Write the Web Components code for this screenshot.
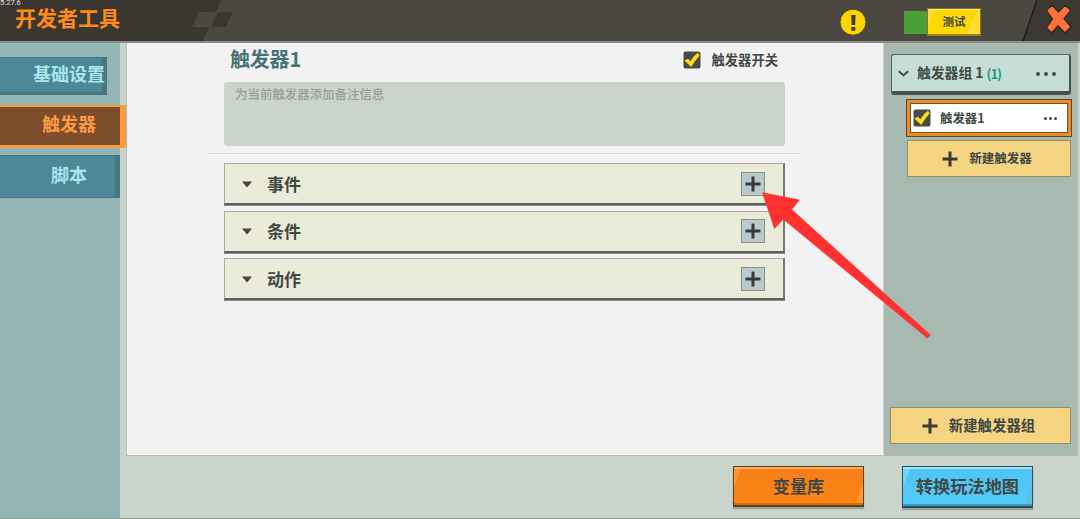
<!DOCTYPE html>
<html lang="zh-CN">
<head>
<meta charset="utf-8">
<title>开发者工具</title>
<style>
body {
    margin: 0;
    overflow: hidden;
    font-family: "Noto Sans CJK SC", sans-serif;
    font-weight: 700;
    color: #414743;
}
</style>
</head>
<body>
<dev-tools></dev-tools>
<script>
// every element only needs a shadow root filled from its own markup
class BaseElement extends HTMLElement {
  constructor() {
    super();
    this.attachShadow({ mode: "open" });
    const template = document.createElement("template");
    template.innerHTML = `<style>
* { box-sizing: border-box; }
:host { display: block; box-sizing: border-box; line-height: 1; white-space: nowrap; }
svg { display: block; flex: none; }
</style>` + this.constructor.markup;
    this.shadowRoot.appendChild(template.content.cloneNode(true));
  }
}

class PlusIcon extends BaseElement {
  static markup = `
<style>
:host { width: 16px; height: 16px; flex: none; }
</style>
<svg width="16" height="16" viewBox="0 0 16 16"><path d="M8 0.5v15M0.5 8h15" stroke="#393b34" stroke-width="3"/></svg>`;
}

class CheckBox extends BaseElement {
  static markup = `
<style>
:host { width: 18px; height: 18px; flex: none; }
</style>
<svg width="18" height="18" viewBox="0 0 18 18">
  <rect x="0.5" y="0.5" width="17" height="17" rx="2" fill="#484a49"/>
  <path d="M1.4 9.6L5 7.7L7.3 10.2Q10.6 4.6 15 1.8L16.6 4.4Q12.2 9.2 8.2 15.9Z" fill="#ffdf12"/>
</svg>`;
}

class MoreDots extends BaseElement {
  static markup = `
<style>
:host { display: flex; gap: var(--gap, 2px); flex: none; }
i { width: var(--dot, 3px); height: var(--dot, 3px); border-radius: 50%; background: #444946; }
</style>
<i></i><i></i><i></i>`;
}

class TopBar extends BaseElement {
  static markup = `
<style>
:host {
    position: relative;
    height: 43px;
    background: #4a4841;
    border-bottom: 2px solid #888b86;
}
.deco { position: absolute; left: 0; top: 0; }
.version { position: absolute; left: 0; top: -1px; font: 400 7.5px/8px Roboto, sans-serif; color: #e4e4e0; }
.row { position: relative; display: flex; align-items: flex-start; height: 41px; padding: 0 8px 0 15px; }
h1 { margin: 7px auto 0 0; font-size: 21px; line-height: 21px; font-weight: 700; color: #ff8a16; }
.warn { margin: 9px 37px 0 0; }
.toggle { display: flex; align-items: center; margin: 8px 64px 0 0; }
.on { width: 23px; height: 23px; background: #4b9f39; }
.knob {
    width: 54px;
    height: 28px;
    border: 1px solid #8d7420;
    border-bottom: 2px solid #a07d15;
    background: linear-gradient(115deg, #fbdc3a 0 12%, #ffd800 13% 78%, #ffdf35 79%);
    box-shadow: inset 0 1px #ffec78;
    font-size: 11.5px;
    line-height: 25px;
    text-align: center;
}
.close { margin-top: 4px; }
</style>
<svg class="deco" width="1080" height="41" viewBox="0 0 1080 41">
  <path d="M0 0H221L203 41H0Z" fill="#3a3730"/>
  <path d="M199 12H218L211 27H192Z" fill="#4a4841"/>
  <path d="M218 12H233L226 27H211Z" fill="#3a3730"/>
  <path d="M1037 0H1080V41H1023Z" fill="#3b3932"/>
  <path d="M1037 0L1023 41" stroke="#1d1c18" stroke-width="1.5"/>
</svg>
<div class="version">5.27.6</div>
<div class="row">
  <h1>开发者工具</h1>
  <svg class="warn" width="28" height="27" viewBox="0 0 28 27">
    <circle cx="14" cy="13.2" r="13" fill="#ffd500" stroke="#4e4727"/>
    <path d="M12.2 6h4.4l-.5 10h-3.4zM12.3 18h4v3.8h-4z" fill="#413b25"/>
  </svg>
  <div class="toggle"><div class="on"></div><div class="knob">测试</div></div>
  <svg class="close" width="27" height="30" viewBox="0 0 27 30">
    <path d="M1.4 6.5L7 1.2L13.4 8.2L20.2 1.2L25.8 6.3L19 14.7L26 23L20 28.8L13 21.6L6.8 28.8L1.2 23.8L7.5 15.2Z" fill="#ff7138" stroke="#2b2722" stroke-width="1.2" stroke-linejoin="round"/>
  </svg>
</div>`;
}

class SideTab extends BaseElement {
  static markup = `
<style>
:host {
    width: 120px;
    height: 43px;
    padding-left: 51px;
    border: solid #4a777f;
    border-width: 1px 5px 1px 0;
    background: #4d8898;
    color: #a6e6ee;
    font-size: 18px;
    line-height: 36px;
}
:host([first]) { width: 107px; height: 38px; padding-left: 33px; line-height: 30px; border-bottom-width: 3px; }
:host([active]) {
    position: relative;
    width: 126px;
    padding-left: 42px;
    border: solid #ff993d;
    border-width: 2px 6px 3px 0;
    background: #7d4e2c;
    color: #ff9a43;
    line-height: 33px;
}
</style>
<slot></slot>`;
}

class SideNav extends BaseElement {
  static markup = `
<style>
:host {
    display: flex;
    flex-direction: column;
    width: 120px;
    flex: none;
    padding-top: 14px;
    background: #94b5b6;
}
side-tab { margin-bottom: 7px; flex: none; }
side-tab[first] { margin-bottom: 10px; }
</style>
<side-tab first>基础设置</side-tab>
<side-tab active>触发器</side-tab>
<side-tab>脚本</side-tab>`;
}

class SectionRow extends BaseElement {
  static markup = `
<style>
:host {
    display: flex;
    align-items: center;
    height: 42px;
    padding: 0 18px 0 17px;
    border: 1px solid #a9aca2;
    border-right: 2px solid #777970;
    border-bottom: 2px solid #5e625c;
    box-shadow: 0 1px #8d8f8a;
    background: #ebebda;
    font-size: 17px;
}
.title { flex: 1; padding: 0 0 1px 15px; }
.add {
    display: grid;
    place-items: center;
    width: 24px;
    height: 24px;
    border: 1px solid #858f8c;
    background: #b8cacb;
}
</style>
<svg width="10" height="6" viewBox="0 0 10 6"><path d="M0 .5H10L5.5 6h-1z" fill="#4d4333"/></svg>
<div class="title"><slot></slot></div>
<div class="add"><plus-icon></plus-icon></div>`;
}

class TriggerPanel extends BaseElement {
  static markup = `
<style>
:host {
    width: 757px;
    flex: none;
    padding: 6px 82px 0 81px;
    border-left: 1px solid #b5bbb8;
    border-bottom: 1px solid #b5bbb8;
    background: #f2f2f2;
}
header { display: flex; align-items: center; height: 21px; padding: 0 23px 0 22px; }
h2 { flex: 1; margin: -1px 0 0; font-size: 20px; letter-spacing: -.2px; color: #467478; }
check-box { margin-top: 1px; }
.label { margin-left: 11px; font-size: 13.3px; }
.note {
    height: 64px;
    margin: 12px 16px 7px;
    padding: 6px 11px;
    border-radius: 3px;
    background: #cbd4ca;
    color: #96a098;
    font-size: 12.45px;
    font-weight: 500;
}
hr { height: 1px; margin: 0; border: 0; background: #ccd8d3; }
.rows { display: grid; gap: 5.6px; padding: 9px 16px 0 16px; }
</style>
<header>
  <h2>触发器1</h2>
  <check-box></check-box>
  <div class="label">触发器开关</div>
</header>
<div class="note">为当前触发器添加备注信息</div>
<hr>
<div class="rows">
  <section-row>事件</section-row>
  <section-row>条件</section-row>
  <section-row>动作</section-row>
</div>`;
}

class AddButton extends BaseElement {
  static markup = `
<style>
:host {
    display: flex;
    align-items: center;
    justify-content: center;
    gap: 11px;
    height: 37px;
    flex: none;
    padding-right: 4px;
    border: 1px solid #958b65;
    background: #f5d582;
}
</style>
<plus-icon></plus-icon>
<slot></slot>`;
}

class GroupPanel extends BaseElement {
  static markup = `
<style>
:host {
    display: flex;
    flex-direction: column;
    width: 194px;
    flex: none;
    padding: 11px 7px 12px 6px;
    background: #a7b9b0;
}
.group {
    display: flex;
    align-items: center;
    height: 41px;
    margin: 0 0 4px 1px;
    padding: 0 13px 0 6px;
    border: 1px solid #56635d;
    border-width: 1px 2px 4px 1px;
    border-color: #56635d #46514c #46514c #56635d;
    border-radius: 3px;
    background: #c7ded6;
    font-size: 13.8px;
}
.name { margin-left: 8px; }
.count { flex: 1; margin-left: 3px; color: #119985; font-size: 13px; letter-spacing: -1px; }
.group more-dots { --dot: 4px; --gap: 4px; margin-top: 2px; }
.item {
    display: flex;
    align-items: center;
    height: 38px;
    margin: 0 -1px 3px 16px;
    padding: 0 14px 0 6px;
    border: 1px solid #5d4728;
    outline: 3px solid #ef8a25;
    outline-offset: -4px;
    background: #fff;
    box-shadow: inset 0 0 0 4px #6b5637;
    font-size: 12.4px;
}
.item .name { flex: 1; margin-left: 9px; }
.new { margin-left: 17px; font-size: 12.5px; }
.new-group { margin-top: auto; font-size: 14.4px; }
</style>
<div class="group">
  <svg width="11" height="7" viewBox="0 0 11 7"><path d="M.8 1.2L5.5 5.3L10.2 1.2" fill="none" stroke="#414743" stroke-width="1.8"/></svg>
  <div class="name">触发器组 1</div>
  <div class="count">(1)</div>
  <more-dots></more-dots>
</div>
<div class="item">
  <check-box></check-box>
  <div class="name">触发器1</div>
  <more-dots></more-dots>
</div>
<add-button class="new">新建触发器</add-button>
<add-button class="new-group">新建触发器组</add-button>`;
}

class GameButton extends BaseElement {
  static markup = `
<style>
:host {
    width: 131px;
    height: 41px;
    border: 2px solid #584225;
    border-width: 1px 1px 2px;
    background: linear-gradient(110deg, #ff9530 0 5%, transparent 5.5% 94%, #ff9936 94.5%), linear-gradient(#f77e18, #ff8613);
    box-shadow: inset 0 2px #ffad55, inset 0 -2px #d8690e, 0 2px 1px #9ba29b;
    font-size: 17.2px;
    line-height: 38px;
    text-align: center;
}
:host([blue]) {
    height: 42px;
    border-color: #2e4e5b;
    background: linear-gradient(110deg, #6fd3fa 0 5%, transparent 5.5% 94%, #62bfe4 94.5%), linear-gradient(#51c2f5, #54cbfb);
    box-shadow: inset 0 2px #9be6ff, inset 0 -2px #3a9cc5, 0 2px 1px #9ba29b;
}
</style>
<slot></slot>`;
}

class PointerArrow extends BaseElement {
  static markup = `
<style>
:host { position: absolute; left: 760px; top: 190px; }
</style>
<svg width="173" height="150" viewBox="760 190 173 150"><path d="M762 192.3L799.8 199.7L792 209.5L930.8 335L927.5 338.4L783.3 219.5L774.3 229Z" fill="#ff3131"/></svg>`;
}

class DevTools extends BaseElement {
  static markup = `
<style>
:host {
    position: relative;
    display: flex;
    flex-direction: column;
    width: 1080px;
    height: 519px;
    overflow: hidden;
    background: #cbd4ca;
    border-bottom: 1px solid #8e9d91;
}
top-bar { flex: none; }
.body { display: flex; flex: 1; }
.main { flex: 1; }
.panels { display: flex; height: 413px; padding-left: 6px; gap: 1px; }
footer { display: flex; gap: 38px; justify-content: flex-end; padding: 10px 47px 0 0; }
</style>
<top-bar></top-bar>
<div class="body">
  <side-nav></side-nav>
  <div class="main">
    <div class="panels">
      <trigger-panel></trigger-panel>
      <group-panel></group-panel>
    </div>
    <footer>
      <game-button>变量库</game-button>
      <game-button blue>转换玩法地图</game-button>
    </footer>
  </div>
</div>
<pointer-arrow></pointer-arrow>`;
}

customElements.define("plus-icon", PlusIcon);
customElements.define("check-box", CheckBox);
customElements.define("more-dots", MoreDots);
customElements.define("top-bar", TopBar);
customElements.define("side-tab", SideTab);
customElements.define("side-nav", SideNav);
customElements.define("section-row", SectionRow);
customElements.define("trigger-panel", TriggerPanel);
customElements.define("add-button", AddButton);
customElements.define("group-panel", GroupPanel);
customElements.define("game-button", GameButton);
customElements.define("pointer-arrow", PointerArrow);
customElements.define("dev-tools", DevTools);
</script>
</body>
</html>
